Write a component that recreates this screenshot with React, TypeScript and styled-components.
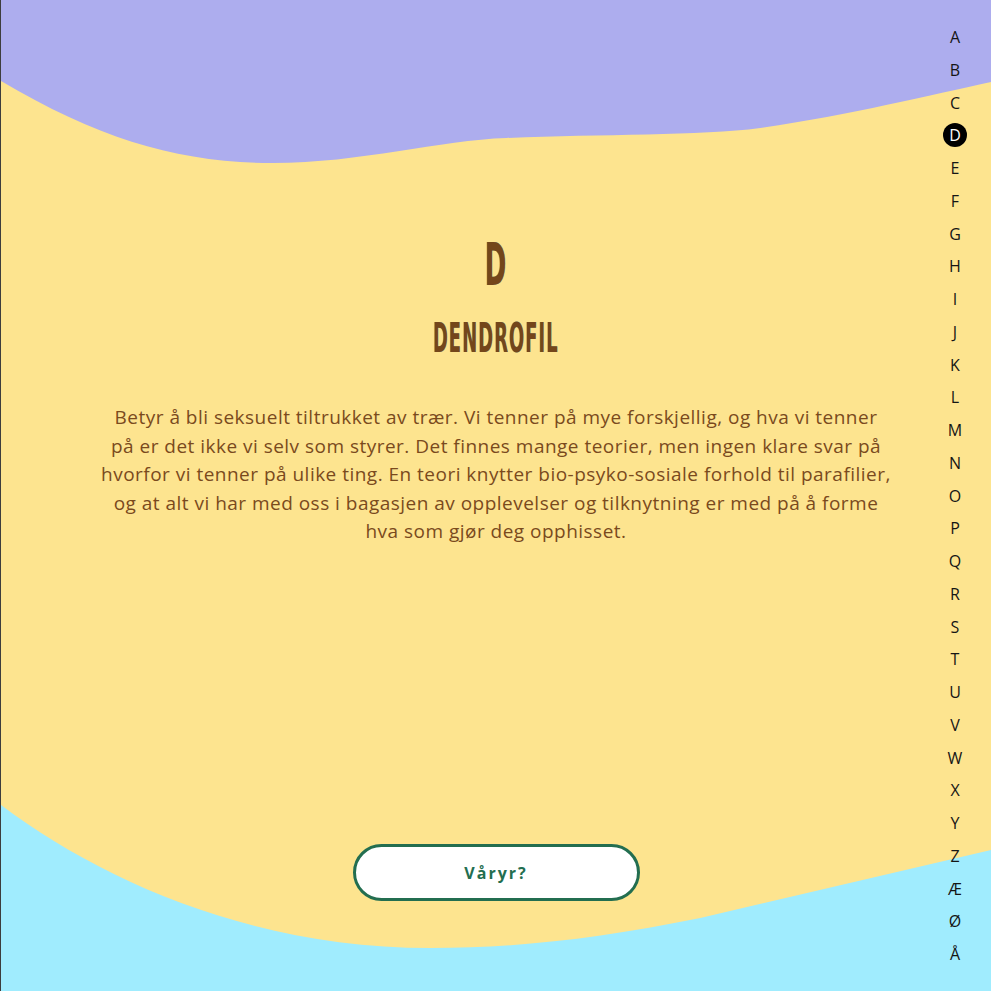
import React from "react";
import styled, { createGlobalStyle } from "styled-components";

const Global = createGlobalStyle`
  html, body { margin: 0; padding: 0; }
  body { font-family: "Open Sans", "Noto Sans", sans-serif; background: #fde48f; }
  * { box-sizing: border-box; }
`;

const Page = styled.div`
  position: relative;
  width: 100%;
  height: 991px;
  overflow: hidden;
  background: #fde48f;
  border-left: 1px solid #3d3d3d;
`;

const Waves = styled.svg`
  position: absolute;
  inset: 0;
  width: 100%;
  height: 100%;
  z-index: 0;
`;

const Main = styled.main`
  position: relative;
  z-index: 1;
  height: 100%;
  display: flex;
  flex-direction: column;
  align-items: center;
  padding: 234px 0 90px;
`;

const Letter = styled.h1`
  margin: 0;
  font-family: "DejaVu Sans Condensed", "DejaVu Sans", sans-serif;
  font-weight: 700;
  font-size: 58px;
  line-height: 62px;
  color: #74461a;
  text-shadow: -1px 0 0 rgba(40, 150, 150, 0.55);
  transform: scaleX(0.5);
`;

const Title = styled.h2`
  margin: 20px 0 0;
  font-family: "DejaVu Sans Condensed", "DejaVu Sans", sans-serif;
  font-weight: 700;
  font-size: 40px;
  line-height: 44px;
  letter-spacing: 2px;
  color: #74461a;
  text-shadow: -1px 0 0 rgba(40, 150, 150, 0.55);
  transform: scaleX(0.5);
`;

const Body = styled.p`
  margin: 43px 0 0;
  max-width: 860px;
  text-align: center;
  font-family: "Open Sans", sans-serif;
  font-size: 19px;
  line-height: 28.5px;
  letter-spacing: 0.48px;
  color: #7a4a1d;
`;

const Button = styled.button`
  margin-top: auto;
  width: 287px;
  height: 57px;
  border-radius: 999px;
  border: 3px solid #236e50;
  background: #fff;
  color: #236e50;
  font-family: "Open Sans", sans-serif;
  font-weight: 700;
  font-size: 16px;
  letter-spacing: 2px;
  cursor: pointer;
`;

const Nav = styled.nav`
  position: absolute;
  z-index: 2;
  top: 25px;
  right: 24px;
  display: flex;
  flex-direction: column;
  align-items: center;
  gap: 8.75px;
`;

const NavItem = styled.a<{ $active?: boolean }>`
  width: 24px;
  height: 24px;
  border-radius: 50%;
  display: flex;
  align-items: center;
  justify-content: center;
  font-family: "Open Sans", sans-serif;
  font-size: 16px;
  color: ${(p) => (p.$active ? "#fff" : "#151515")};
  background: ${(p) => (p.$active ? "#000" : "transparent")};
  text-decoration: none;
`;

const letters = "ABCDEFGHIJKLMNOPQRSTUVWXYZÆØÅ".split("");

export default function App() {
  return (
    <>
      <Global />
      <Page>
        <Waves viewBox="0 0 991 991" preserveAspectRatio="none">
          <path
            d="M0 0 H991 V82 C930 95 850 115 760 128 C700 136 600 134 506 138 C440 140 360 163 272 163 C180 163 100 140 0 81 Z"
            fill="#adadee"
          />
          <path
            d="M0 805 C100 880 250 948 430 948 C520 948 600 938 700 918 L991 850 V991 H0 Z"
            fill="#a0ecfe"
          />
        </Waves>
        <Main>
          <Letter>D</Letter>
          <Title>DENDROFIL</Title>
          <Body>
            Betyr å bli seksuelt tiltrukket av trær. Vi tenner på mye forskjellig, og hva vi tenner
            <br />
            på er det ikke vi selv som styrer. Det finnes mange teorier, men ingen klare svar på
            <br />
            hvorfor vi tenner på ulike ting. En teori knytter bio-psyko-sosiale forhold til parafilier,
            <br />
            og at alt vi har med oss i bagasjen av opplevelser og tilknytning er med på å forme
            <br />
            hva som gjør deg opphisset.
          </Body>
          <Button>Våryr?</Button>
        </Main>
        <Nav>
          {letters.map((l) => (
            <NavItem key={l} href="#" $active={l === "D"}>
              {l}
            </NavItem>
          ))}
        </Nav>
      </Page>
    </>
  );
}
